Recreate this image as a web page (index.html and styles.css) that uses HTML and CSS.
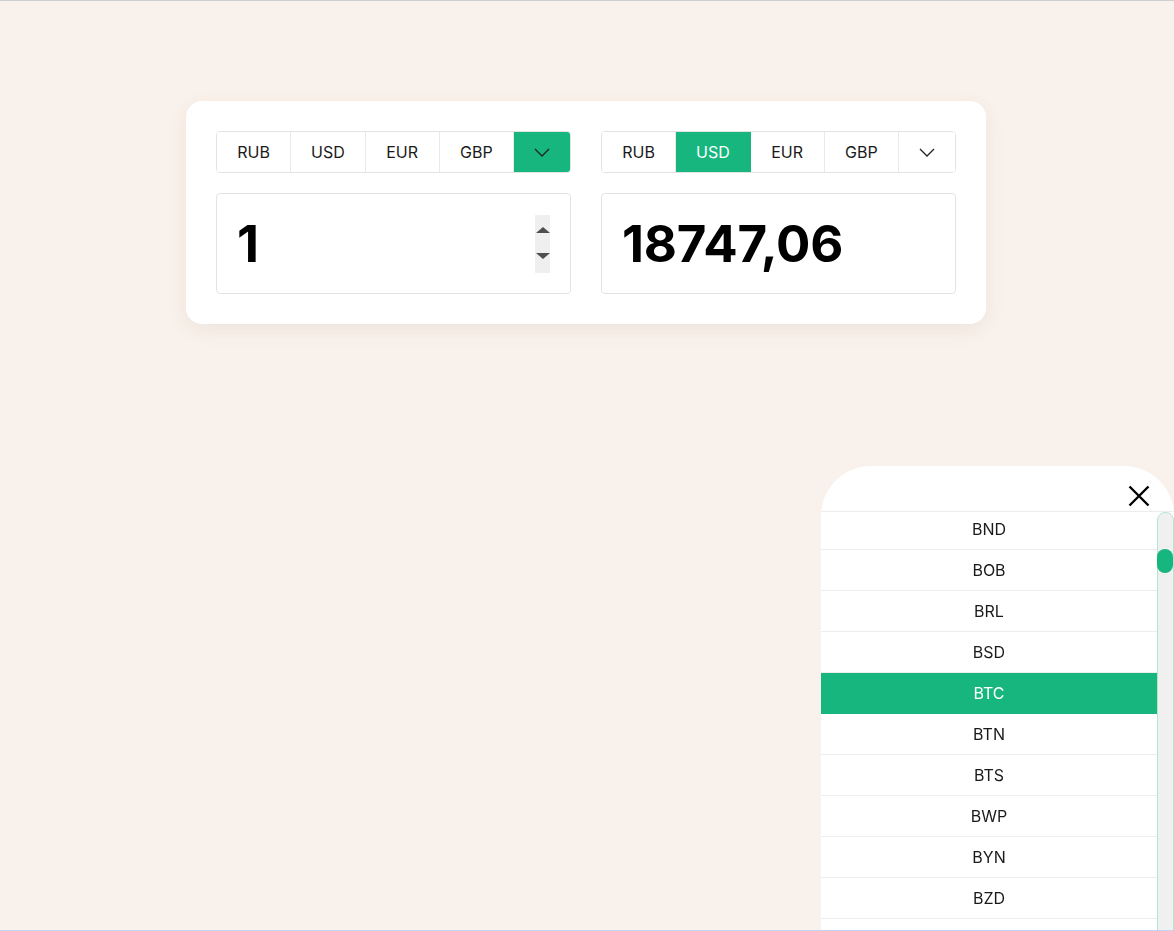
FILE: index.html
```html
<!DOCTYPE html>
<html lang="ru">
<head>
<meta charset="utf-8">
<title>Конвертер валют</title>
<link rel="stylesheet" href="styles.css">
</head>
<body>
<div class="page">
  <div class="card">
    <div class="col">
      <div class="tabs">
        <button class="tab">RUB</button>
        <button class="tab">USD</button>
        <button class="tab">EUR</button>
        <button class="tab">GBP</button>
        <button class="tab more active">
          <svg width="16" height="9" viewBox="0 0 16 9"><path d="M1 1l7 7 7-7" fill="none" stroke="#222" stroke-width="1.3"/></svg>
        </button>
      </div>
      <div class="field">
        <span class="value">1</span>
        <div class="spinner">
          <span class="tri up"></span>
          <span class="tri down"></span>
        </div>
      </div>
    </div>
    <div class="col">
      <div class="tabs">
        <button class="tab">RUB</button>
        <button class="tab active">USD</button>
        <button class="tab">EUR</button>
        <button class="tab">GBP</button>
        <button class="tab more">
          <svg width="16" height="9" viewBox="0 0 16 9"><path d="M1 1l7 7 7-7" fill="none" stroke="#222" stroke-width="1.3"/></svg>
        </button>
      </div>
      <div class="field">
        <span class="value">18747,06</span>
      </div>
    </div>
  </div>

  <div class="popup">
    <div class="popup-head">
      <svg class="close" width="22" height="22" viewBox="0 0 22 22"><path d="M1.5 1.5l19 19M20.5 1.5l-19 19" stroke="#000" stroke-width="2.4" fill="none"/></svg>
    </div>
    <div class="popup-body">
      <div class="list">
        <div class="list-inner">
          <div class="row">BND</div>
          <div class="row">BOB</div>
          <div class="row">BRL</div>
          <div class="row">BSD</div>
          <div class="row active">BTC</div>
          <div class="row">BTN</div>
          <div class="row">BTS</div>
          <div class="row">BWP</div>
          <div class="row">BYN</div>
          <div class="row">BZD</div>
          <div class="row"></div>
        </div>
      </div>
      <div class="scrollbar"><div class="thumb"></div></div>
    </div>
  </div>
  <div class="bottom-line"></div>
</div>
</body>
</html>
```

FILE: styles.css
```css
* { box-sizing: border-box; }
html, body { margin: 0; padding: 0; height: 100%; }
body {
  background: #f9f1eb;
  font-family: Inter, "Noto Sans", sans-serif;
  color: #1a1a1a;
  overflow: hidden;
}
.page {
  min-height: 100%;
  border-top: 1px solid #cfcfcf;
  display: flex;
  justify-content: center;
  align-items: flex-start;
  padding: 100px 2px 0 0;
}
.card {
  width: 800px;
  background: #fff;
  border-radius: 16px;
  box-shadow: 0 6px 20px rgba(120, 90, 70, 0.08);
  padding: 30px;
  display: flex;
  gap: 30px;
}
.col {
  flex: 1;
  display: flex;
  flex-direction: column;
  gap: 20px;
}
.tabs {
  display: flex;
  height: 42px;
  border: 1px solid #e3e3e3;
  border-radius: 4px;
  overflow: hidden;
}
.tab {
  flex: 1;
  border: 0;
  border-right: 1px solid #e9e9e9;
  background: #fff;
  font-family: inherit;
  font-size: 16px;
  color: #1a1a1a;
  padding: 0;
  display: flex;
  align-items: center;
  justify-content: center;
}
.tab.more {
  flex: 0 0 56px;
  border-right: 0;
}
.tab.active {
  background: #16b67e;
  color: #fff;
  border-right-color: #16b67e;
}
.field {
  height: 101px;
  border: 1px solid #e3e3e3;
  border-radius: 4px;
  display: flex;
  align-items: center;
  justify-content: space-between;
  padding: 0 20px 0 20px;
}
.value {
  font-size: 51px;
  font-weight: 700;
  color: #000;
  letter-spacing: -0.2px;
}
.spinner {
  width: 15px;
  height: 58px;
  background: #efefef;
  display: flex;
  flex-direction: column;
  align-items: center;
  justify-content: space-between;
  padding: 12px 0 14px;
}
.tri {
  width: 0;
  height: 0;
  border-left: 7px solid transparent;
  border-right: 7px solid transparent;
}
.tri.up { border-bottom: 6px solid #4f4f4f; }
.tri.down { border-top: 6px solid #4f4f4f; }

.popup {
  position: fixed;
  right: 0;
  bottom: 0;
  width: 353px;
  height: 465px;
  background: #fff;
  border-radius: 50px 50px 0 0;
  display: flex;
  flex-direction: column;
  overflow: hidden;
}
.popup-head {
  height: 45px;
  flex: 0 0 45px;
  display: flex;
  justify-content: flex-end;
  align-items: flex-start;
  padding: 19px 24px 0 0;
}
.popup-body {
  flex: 1;
  display: flex;
  border-top: 1px solid #ededed;
  min-height: 0;
}
.list {
  flex: 1;
  overflow: hidden;
}
.list-inner {
  margin-top: -3px;
}
.row {
  height: 41px;
  border-bottom: 1px solid #ededed;
  display: flex;
  align-items: center;
  justify-content: center;
  font-size: 16px;
  color: #1a1a1a;
}
.row.active {
  background: #16b67e;
  color: #fff;
  border-bottom-color: #16b67e;
}
.scrollbar {
  flex: 0 0 17px;
  width: 17px;
  background: #f0f0f0;
  border: 1px solid #b7e3d1;
  border-radius: 8px;
  margin: 0 0 -8px 0;
  padding-top: 36px;
}
.thumb {
  width: 16px;
  height: 24px;
  margin-left: -1px;
  border-radius: 8px;
  background: #16b67e;
}
.bottom-line {
  position: fixed;
  left: 0;
  right: 0;
  bottom: 0;
  height: 1px;
  background: #c6d3ee;
}
```
